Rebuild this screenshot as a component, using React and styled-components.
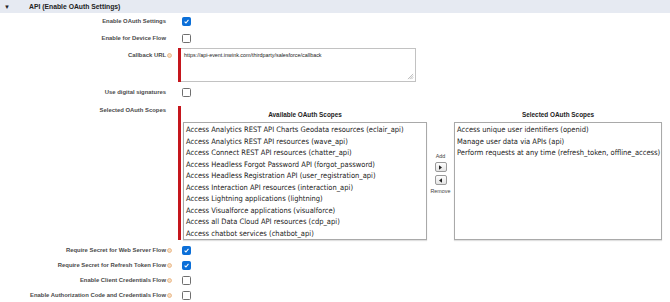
import React from 'react';
import styled, { createGlobalStyle } from 'styled-components';

const available = [
	'Access Analytics REST API Charts Geodata resources (eclair_api)',
	'Access Analytics REST API resources (wave_api)',
	'Access Connect REST API resources (chatter_api)',
	'Access Headless Forgot Password API (forgot_password)',
	'Access Headless Registration API (user_registration_api)',
	'Access Interaction API resources (interaction_api)',
	'Access Lightning applications (lightning)',
	'Access Visualforce applications (visualforce)',
	'Access all Data Cloud API resources (cdp_api)',
	'Access chatbot services (chatbot_api)',
];

const selected = [
	'Access unique user identifiers (openid)',
	'Manage user data via APIs (api)',
	'Perform requests at any time (refresh_token, offline_access)',
];

const flows = [
	{ label: 'Require Secret for Web Server Flow', checked: true },
	{ label: 'Require Secret for Refresh Token Flow', checked: true },
	{ label: 'Enable Client Credentials Flow', checked: false },
	{ label: 'Enable Authorization Code and Credentials Flow', checked: false },
];

function Info() {
	return (
		<InfoIcon viewBox="0 0 6 6">
			<circle cx="3" cy="3" r="2.4" fill="#f6dcc0" stroke="#e2a468" strokeWidth="0.8" />
		</InfoIcon>
	);
}

function Check({ checked }) {
	return (
		<Box checked={checked}>
			{checked && (
				<svg viewBox="0 0 10 10" width="9" height="9">
					<path d="M2.3 5.2 L4.2 7.1 L7.8 2.8" fill="none" stroke="#fff" strokeWidth="1.5" />
				</svg>
			)}
		</Box>
	);
}

function App() {
	return (
		<>
			<GlobalStyle />
			<Header>
				<Caret>▼</Caret>
				<HeaderTitle>API (Enable OAuth Settings)</HeaderTitle>
			</Header>
			<Form>
				<Row h={17}>
					<Label>Enable OAuth Settings</Label>
					<Field><Check checked /></Field>
				</Row>
				<Row h={14}>
					<Label>Enable for Device Flow</Label>
					<Field><Check /></Field>
				</Row>
				<Row h={40}>
					<Label top={3}>Callback URL<Info /></Label>
					<Required>
						<TextArea>
							https://api-event.inwink.com/thirdparty/salesforce/callback
							<Grip viewBox="0 0 8 8">
								<path d="M7 1 L1 7 M7 3 L3 7 M7 5 L5 7" stroke="#999" strokeWidth="0.7" />
							</Grip>
						</TextArea>
					</Required>
				</Row>
				<Row h={18}>
					<Label>Use digital signatures</Label>
					<Field><Check /></Field>
				</Row>
				<Row h={140}>
					<Label>Selected OAuth Scopes</Label>
					<Scopes>
						<ScopeCol>
							<ColTitle>Available OAuth Scopes</ColTitle>
							<ListBox w={244}>
								{available.map((s, i) => (
									<Item key={i}>{s}</Item>
								))}
							</ListBox>
						</ScopeCol>
						<Mover>
							<MoverLabel>Add</MoverLabel>
							<MoveButton>
								<svg viewBox="0 0 4 6" width="3" height="5"><path d="M0 0 L4 3 L0 6Z" fill="#222" /></svg>
							</MoveButton>
							<MoveButton>
								<svg viewBox="0 0 4 6" width="3" height="5"><path d="M4 0 L0 3 L4 6Z" fill="#222" /></svg>
							</MoveButton>
							<MoverLabel>Remove</MoverLabel>
						</Mover>
						<ScopeCol>
							<ColTitle>Selected OAuth Scopes</ColTitle>
							<ListBox w={208}>
								{selected.map((s, i) => (
									<Item key={i}>{s}</Item>
								))}
							</ListBox>
						</ScopeCol>
					</Scopes>
				</Row>
				{flows.map((f) => (
					<Row h={15} key={f.label}>
						<Label>{f.label}<Info /></Label>
						<Field><Check checked={f.checked} /></Field>
					</Row>
				))}
			</Form>
		</>
	);
}

const GlobalStyle = createGlobalStyle`
	body {
		margin: 0;
		background: #fff;
		font-family: 'Liberation Sans', Arial, sans-serif;
		color: #333;
	}
`;
const Header = styled.div`
	display: flex;
	align-items: center;
	height: 13px;
	background: #e6eaf2;
`;
const Caret = styled.span`
	width: 29px;
	padding-left: 4px;
	box-sizing: border-box;
	font-size: 6px;
	color: #222;
`;
const HeaderTitle = styled.span`
	font-size: 6.8px;
	font-weight: 700;
	color: #222;
`;
const Form = styled.div`
	padding-top: 4px;
`;
const Row = styled.div`
	display: grid;
	grid-template-columns: 178px 1fr;
	height: ${(props) => props.h}px;
`;
const Label = styled.div`
	text-align: right;
	padding-right: 12px;
	padding-top: ${(props) => props.top || 0}px;
	font-size: 5.9px;
	font-weight: 700;
	color: #4a4a4a;
	line-height: 8px;
	white-space: nowrap;
`;
const InfoIcon = styled.svg`
	width: 5px;
	height: 5px;
	margin-left: 1px;
	margin-right: -6px;
	vertical-align: -0.5px;
`;
const Field = styled.div`
	padding-left: 4px;
`;
const Box = styled.span`
	display: flex;
	align-items: center;
	justify-content: center;
	width: 9px;
	height: 9px;
	box-sizing: border-box;
	border-radius: 1.5px;
	border: 1px solid ${(props) => (props.checked ? '#0b6fd8' : '#6f6f6f')};
	background: ${(props) => (props.checked ? '#0b6fd8' : '#fff')};
`;
const Required = styled.div`
	border-left: 3px solid #c5161d;
	align-self: start;
`;
const TextArea = styled.div`
	position: relative;
	width: 235px;
	height: 34px;
	box-sizing: border-box;
	border: 1px solid #c2c2c2;
	border-left: none;
	padding: 3px 3px 0 3px;
	font-size: 5.4px;
	color: #222;
`;
const Grip = styled.svg`
	position: absolute;
	right: 1px;
	bottom: 1px;
	width: 7px;
	height: 7px;
`;
const Scopes = styled.div`
	display: flex;
	align-items: flex-start;
	border-left: 3px solid #c5161d;
	padding-left: 2px;
	height: 134px;
`;
const ScopeCol = styled.div`
	display: flex;
	flex-direction: column;
	align-items: center;
	padding-top: 5px;
`;
const ColTitle = styled.div`
	font-size: 6.4px;
	font-weight: 700;
	color: #222;
	height: 11px;
`;
const ListBox = styled.div`
	width: ${(props) => props.w}px;
	height: 118px;
	box-sizing: border-box;
	border: 1px solid #a9a9a9;
	box-shadow: 0 1px 1px rgba(0, 0, 0, 0.12);
	padding: 1px 2px;
	overflow: hidden;
`;
const Item = styled.div`
	font-family: 'DejaVu Sans Condensed', 'DejaVu Sans', sans-serif;
	font-size: 7.5px;
	line-height: 11.5px;
	color: #222;
	white-space: nowrap;
`;
const Mover = styled.div`
	width: 27px;
	display: flex;
	flex-direction: column;
	align-items: center;
	gap: 3px;
	padding-top: 47px;
`;
const MoverLabel = styled.div`
	font-size: 5.4px;
	color: #444;
`;
const MoveButton = styled.div`
	display: flex;
	align-items: center;
	justify-content: center;
	width: 12px;
	height: 10px;
	box-sizing: border-box;
	border: 1px solid #9a9a9a;
	border-radius: 2px;
	background: linear-gradient(#fdfdfd, #e4e4e4);
`;

export default App;
